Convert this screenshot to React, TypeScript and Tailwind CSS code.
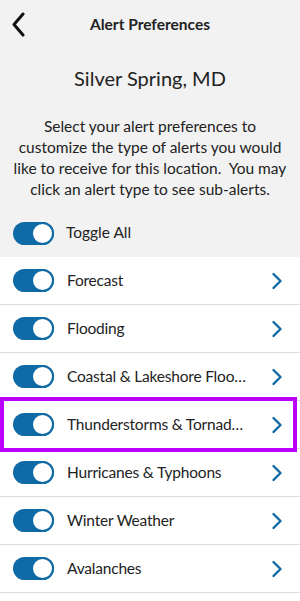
import React from 'react';

const alertTypes = [
  'Forecast',
  'Flooding',
  'Coastal & Lakeshore Flooding',
  'Thunderstorms & Tornadoes',
  'Hurricanes & Typhoons',
  'Winter Weather',
  'Avalanches',
];

function Toggle() {
  return (
    <div className="w-[41px] h-[23px] rounded-full bg-[#0f6aa5] flex items-center justify-end shrink-0">
      <div className="w-[23px] h-[23px] rounded-full bg-white border-2 border-[#0f6aa5]" />
    </div>
  );
}

function Chevron() {
  return (
    <svg width="12" height="18" viewBox="0 0 12 18" className="shrink-0">
      <path d="M2.5 2 L9.5 9 L2.5 16" fill="none" stroke="#0f6aa5" strokeWidth="2.4" strokeLinecap="round" strokeLinejoin="round" />
    </svg>
  );
}

export default function App() {
  return (
    <div className="w-[300px] h-[601px] overflow-hidden bg-[#f2f2f2] text-[#222] font-['Lato',sans-serif] flex flex-col">
      <header className="h-[50px] flex items-center px-[10px] shrink-0">
        <svg width="18" height="26" viewBox="0 0 18 26" className="shrink-0">
          <path d="M13 2 L4 12.5 L13 23" fill="none" stroke="#111" strokeWidth="3" strokeLinecap="round" strokeLinejoin="round" />
        </svg>
        <h1 className="flex-1 text-center text-[15.5px] font-bold pr-[18px]">Alert Preferences</h1>
      </header>

      <div className="text-center text-[20px] mt-[15px] leading-[26px]">Silver Spring, MD</div>

      <p className="text-center text-[15.5px] leading-[21px] mt-[25px] whitespace-nowrap">
        Select your alert preferences to<br />
        customize the type of alerts you would<br />
        like to receive for this location.&nbsp; You may<br />
        click an alert type to see sub-alerts.
      </p>

      <div className="flex items-center gap-[12px] px-[13px] h-[42px] mt-[12px] shrink-0">
        <Toggle />
        <span className="text-[15.5px]">Toggle All</span>
      </div>

      <ul className="bg-white mt-[3px] flex-1">
        {alertTypes.map((label, i) => (
          <li key={label} className="relative h-[48px] flex items-center pl-[13px] pr-[17px] border-b border-[#dcdcdc]">
            <Toggle />
            <span className="flex-1 min-w-0 truncate text-[15.5px] tracking-[-0.2px] ml-[13px] mr-[22px]">{label}</span>
            <Chevron />
            {i === 3 && (
              <div className="absolute left-0 right-[3px] -top-[4px] -bottom-[4px] border-4 border-[#bc00ff]" />
            )}
          </li>
        ))}
      </ul>
    </div>
  );
}
